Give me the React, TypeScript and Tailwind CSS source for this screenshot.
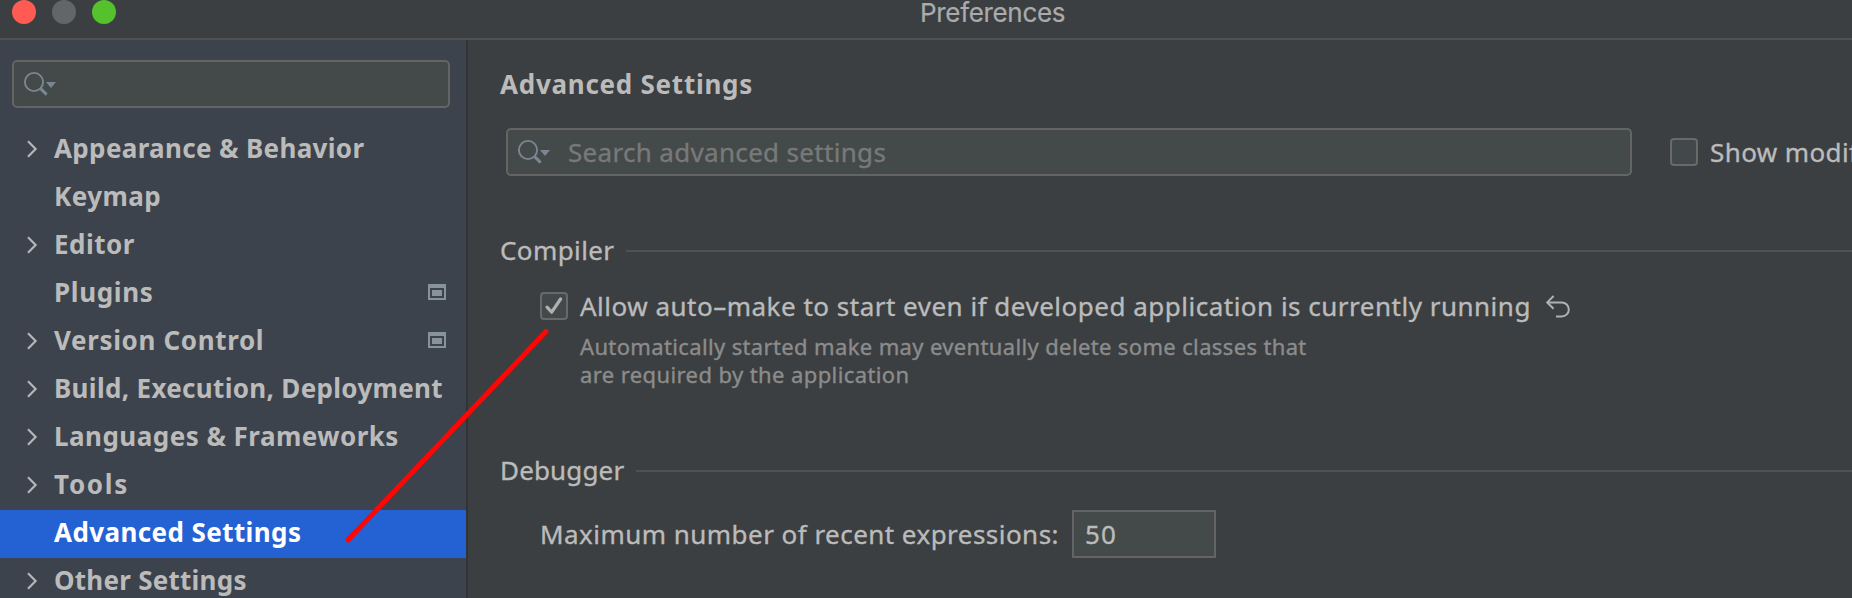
type NavItem = {
  label: string;
  text: string;
  expandable?: boolean;
  projectLevel?: boolean;
  selected?: boolean;
};

const navItems: NavItem[] = [
  { label: "Appearance & Behavior", text: "tracking-[0.34px]", expandable: true },
  { label: "Keymap", text: "tracking-[0.45px]" },
  { label: "Editor", text: "tracking-[0.5px]", expandable: true },
  { label: "Plugins", text: "tracking-[0.65px]", projectLevel: true },
  { label: "Version Control", text: "tracking-[0.65px]", expandable: true, projectLevel: true },
  { label: "Build, Execution, Deployment", text: "tracking-[0.32px]", expandable: true },
  { label: "Languages & Frameworks", text: "tracking-[0.47px]", expandable: true },
  { label: "Tools", text: "tracking-[1.7px]", expandable: true },
  { label: "Advanced Settings", text: "tracking-[0.41px]", selected: true },
  { label: "Other Settings", text: "tracking-[0.25px]", expandable: true },
];

function Chevron() {
  return (
    <svg className="block h-5 w-4" viewBox="0 0 16 20" fill="none" stroke="#b4b6b8" strokeWidth="2.2">
      <path d="M3 2.2 10.6 10 3 17.8" />
    </svg>
  );
}

function ProjectIcon() {
  return (
    <svg className="block h-4 w-[18px]" viewBox="0 0 18 16" fill="#87939a">
      <path fillRule="evenodd" d="M0 0h18v16H0zM2 4v10h14V4z" />
      <path d="M4 6h10v6H4z" />
    </svg>
  );
}

function SearchIcon() {
  return (
    <svg className="block h-7 w-9 shrink-0" viewBox="0 0 36 28" fill="none">
      <circle cx="12" cy="12" r="9.1" stroke="#7a8790" strokeWidth="1.9" />
      <path d="m18.6 18.6 6 6" stroke="#7a8790" strokeWidth="3" />
      <path d="M24 12h10l-5 6z" fill="#7a8790" />
    </svg>
  );
}

function Checkbox({ checked = false }: { checked?: boolean }) {
  return (
    <span className="flex size-7 shrink-0 items-center justify-center rounded-[4px] border-2 border-[#696969] bg-[#43494a]">
      {checked && (
        <svg className="block size-6" viewBox="0 0 24 24" fill="none" stroke="#b0b0b0" strokeWidth="3.2">
          <path d="m5 13.2 4.7 5L18.6 5" strokeLinecap="round" strokeLinejoin="round" />
        </svg>
      )}
    </span>
  );
}

function UndoIcon() {
  return (
    <svg className="block h-7 w-7 shrink-0" viewBox="0 0 28 28" fill="none" stroke="#afb1b3" strokeWidth="2">
      <path d="M9.6 4 3.2 10.4l6.4 6.4" />
      <path d="M3.2 10.4h14.6a7 7 0 0 1 0 14H12" />
    </svg>
  );
}

function SectionTitle({ title, className }: { title: string; className: string }) {
  return (
    <div className="flex h-8 items-center">
      <h2 className={className}>{title}</h2>
      <div className="mt-0.5 h-0.5 flex-1 bg-[#525151]" />
    </div>
  );
}

export default function App() {
  return (
    <div className="relative flex h-[598px] w-full flex-col overflow-hidden bg-[#3c3f41] font-['Noto_Sans',sans-serif] text-[26px] leading-8 whitespace-nowrap text-[#bbbbbb]">
      <header className="flex h-10 shrink-0 items-start border-b-2 border-[#525151]">
        <div className="flex w-[920px] gap-4 pl-3">
          <span className="size-6 rounded-full bg-[#ff5b53]" />
          <span className="size-6 rounded-full bg-[#646567]" />
          <span className="size-6 rounded-full bg-[#55c22d]" />
        </div>
        <h1 className="font-['Inter',sans-serif] leading-[25px] tracking-[-0.33px] text-[#a9abac] [-webkit-text-stroke:0.2px]">
          Preferences
        </h1>
      </header>

      <div className="flex min-h-0 flex-1">
        <aside className="w-[468px] shrink-0 border-r-2 border-[#323334] bg-[#3d434c]">
          <div className="mx-3 mt-5 mb-[18px] flex h-12 w-[438px] items-center rounded-[5px] border-2 border-[#646464] bg-[#444a49] pl-2">
            <SearchIcon />
          </div>
          <nav>
            {navItems.map((item) => (
              <div
                key={item.label}
                className={item.selected ? "flex h-12 items-center bg-[#2462d3] text-white" : "flex h-12 items-center"}
              >
                <span className="w-[29px] shrink-0 pb-0.5 pl-[25px]">{item.expandable && <Chevron />}</span>
                <span className="flex flex-1 pb-1 pl-[25px] font-bold">
                  <span className={item.text}>{item.label}</span>
                </span>
                {item.projectLevel && (
                  <span className="mr-5 pb-1">
                    <ProjectIcon />
                  </span>
                )}
              </div>
            ))}
          </nav>
        </aside>

        <main className="min-w-0 flex-1 overflow-hidden pt-7 pl-8">
          <h2 className="h-8 font-bold tracking-[0.74px]">Advanced Settings</h2>

          <div className="mt-7 ml-1.5 flex items-center [-webkit-text-stroke:0.35px]">
            <div className="flex h-12 w-[1126px] shrink-0 items-center rounded-[5px] border-2 border-[#646464] bg-[#444a49] pl-2">
              <SearchIcon />
              <span className="ml-4 tracking-[0.32px] text-[#787979]">Search advanced settings</span>
            </div>
            <div className="ml-[38px] flex items-center gap-3">
              <Checkbox />
              <span className="tracking-[0.4px]">Show modified settings only</span>
            </div>
          </div>

          <section className="mt-[58px] [-webkit-text-stroke:0.35px]">
            <SectionTitle title="Compiler" className="w-[126px] tracking-[0.4px]" />
            <div className="mt-[26px] ml-10 flex h-7 items-center">
              <Checkbox checked />
              <span className="ml-3 w-[950px] tracking-[0.5px]">
                Allow auto–make to start even if developed application is currently running
              </span>
              <span className="ml-3.5">
                <UndoIcon />
              </span>
            </div>
            <p className="mt-3 ml-20 text-[22px] leading-7 text-[#8c8c8c]">
              <span className="block tracking-[0.36px]">
                Automatically started make may eventually delete some classes that
              </span>
              <span className="block tracking-[0.4px]">are required by the application</span>
            </p>
          </section>

          <section className="mt-[66px] [-webkit-text-stroke:0.35px]">
            <SectionTitle title="Debugger" className="w-[136px] tracking-[0.15px]" />
            <div className="mt-6 ml-10 flex items-center">
              <span className="w-[532px] tracking-[0.46px]">Maximum number of recent expressions:</span>
              <div className="flex h-12 w-36 items-center border-2 border-[#646464] bg-[#444a49] pl-[11px] tracking-[1.2px]">
                50
              </div>
            </div>
          </section>
        </main>
      </div>

      <svg className="pointer-events-none absolute top-[320px] left-[330px] h-[240px] w-[230px]" viewBox="330 320 230 240">
        <path d="M348 540 546 331.5" stroke="#ff0505" strokeWidth="5" strokeLinecap="round" />
      </svg>
    </div>
  );
}
